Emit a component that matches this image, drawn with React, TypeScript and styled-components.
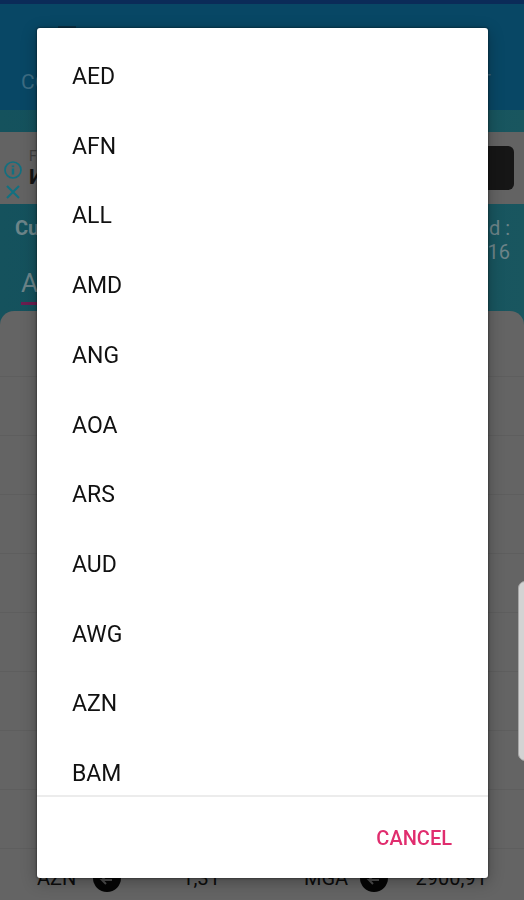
import React from "react";
import styled, { createGlobalStyle } from "styled-components";

const GlobalStyle = createGlobalStyle`
  * { box-sizing: border-box; }
  html, body, #root { height: 100%; }
  body {
    margin: 0;
    overflow: hidden;
    font-family: Roboto, "Liberation Sans", sans-serif;
    background: #646464;
  }
  button { font: inherit; border: 0; background: none; cursor: pointer; }
`;

const Page = styled.main`
  height: 100%;
  display: flex;
  flex-direction: column;
  overflow: hidden;
  background: linear-gradient(90deg, #15525d, #105060 50%, #19565f);
`;

const StatusBar = styled.div`
  flex: none;
  height: 4px;
  background: #0b2b58;
`;

const Header = styled.header`
  flex: none;
  height: 106px;
  padding: 22px 33px 0 21px;
  display: flex;
  flex-direction: column;
  justify-content: space-between;
  background: #084765;
`;

const MenuMark = styled.span`
  width: 18px;
  height: 3px;
  margin-left: 37px;
  background: #0a3146;
`;

const Tabs = styled.nav`
  display: flex;
  justify-content: space-between;
  padding-bottom: 16px;
  font-size: 21px;
  line-height: 24px;
  color: #3d6c82;
`;

const AdBanner = styled.aside`
  flex: none;
  height: 72px;
  margin-top: 22px;
  padding: 0 10px 0 4px;
  display: flex;
  align-items: center;
  background: #636363;
`;

const AdIcons = styled.div`
  display: flex;
  flex-direction: column;
  gap: 4px;
  padding-top: 25px;
`;

const AdIconButton = styled.button`
  display: flex;
  padding: 0;
  color: #127080;
`;

const AdText = styled.div`
  flex: 1;
  padding-left: 7px;
  color: #3e3e3e;
  font-size: 14px;
  line-height: 18px;
`;

const AdTitle = styled.strong`
  display: block;
  font-size: 21px;
  line-height: 24px;
  color: #141414;
`;

const AdAction = styled.div`
  width: 90px;
  height: 44px;
  border-radius: 6px;
  background: #161616;
`;

const Summary = styled.section`
  flex: none;
  height: 107px;
  padding: 12px 14px 0 15px;
  display: flex;
  justify-content: space-between;
  font-size: 20px;
  line-height: 24px;
  color: #6c8489;
`;

const Heading = styled.strong`
  display: block;
  font-weight: 700;
`;

const CurrencyField = styled.div`
  width: 90px;
  margin: 27px 0 0 6px;
  padding-bottom: 3px;
  border-bottom: 3px solid #6b1e50;
  font-size: 26px;
  line-height: 32px;
`;

const Updated = styled.div`
  text-align: right;
`;

const Rates = styled.section`
  flex: 1;
  display: flex;
  flex-direction: column;
  padding-top: 7px;
  border-radius: 14px 14px 0 0;
  overflow: hidden;
  background: #646464;
`;

const RateRow = styled.div`
  flex: none;
  height: 59px;
  padding: 0 37px 0 37px;
  display: grid;
  grid-template-columns: 1fr 1fr;
  column-gap: 84px;
  align-items: center;
  border-bottom: 1px solid #5e5e5e;
  font-size: 20px;
  color: #0c0c0c;
`;

const Rate = styled.div`
  display: grid;
  grid-template-columns: 55px 1fr auto;
  align-items: center;
`;

const EdgeHandle = styled.div`
  position: fixed;
  right: -8px;
  top: 64.5%;
  width: 14px;
  height: 20%;
  border-radius: 8px;
  border: 1px solid #a6a6a6;
  background: #d3d3d3;
`;

const Dialog = styled.div`
  position: fixed;
  inset: 28px 36px 22px 37px;
  display: flex;
  flex-direction: column;
  border-radius: 3px;
  background: #fff;
  box-shadow: 0 0 2px 1px rgba(0, 0, 0, 0.3), 0 4px 16px rgba(0, 0, 0, 0.3);
`;

const Scroller = styled.div`
  flex: 1;
  min-height: 0;
  overflow: hidden;
`;

const OptionList = styled.ul`
  height: 100%;
  margin: 14px 0 0;
  padding: 0;
  list-style: none;
  display: flex;
  flex-direction: column;
`;

const OptionItem = styled.li`
  flex: 1;
  display: flex;
`;

const Option = styled.button`
  flex: 1;
  padding: 0 35px;
  text-align: left;
  font-size: 23px;
  line-height: 28px;
  color: #111;
`;

const Actions = styled.footer`
  flex: none;
  height: 83px;
  padding: 0 28px;
  display: flex;
  align-items: center;
  justify-content: flex-end;
  border-top: 2px solid #ececec;
`;

const CancelButton = styled.button`
  padding: 8px;
  font-size: 20px;
  line-height: 24px;
  font-weight: 500;
  color: #e02d6e;
`;

const currencies = ["AED", "AFN", "ALL", "AMD", "ANG", "AOA", "ARS", "AUD", "AWG", "AZN", "BAM"];
const emptyRows = Array.from({ length: 9 }, (_, i) => i);
const rates = [
  { code: "AZN", amount: "1,31" },
  { code: "MGA", amount: "2900,91" },
];

const InfoIcon = () => (
  <svg width="18" height="18" viewBox="0 0 18 18" fill="none" stroke="currentColor" strokeWidth="1.7">
    <circle cx="9" cy="9" r="8" />
    <path d="M9 7.6V13.4M9 4.4V6.2" strokeWidth="2.4" />
  </svg>
);

const CloseIcon = () => (
  <svg width="18" height="18" viewBox="0 0 18 18" fill="none" stroke="currentColor" strokeWidth="2.1">
    <path d="M3 3L15 15M15 3L3 15" />
  </svg>
);

const SwapIcon = () => (
  <svg width="30" height="30" viewBox="0 0 30 30" fill="none">
    <circle cx="15" cy="15" r="14" fill="#050505" />
    <path d="M9 12H21L17 8M20 17H10L14 21M10 17L14 13" stroke="#4c4c4c" strokeWidth="2" />
  </svg>
);

export default function App() {
  return (
    <>
      <GlobalStyle />
      <Page>
        <StatusBar />
        <Header>
          <MenuMark />
          <Tabs>
            <span>CO</span>
            <span>T</span>
          </Tabs>
        </Header>
        <AdBanner>
          <AdIcons>
            <AdIconButton aria-label="Ad information"><InfoIcon /></AdIconButton>
            <AdIconButton aria-label="Close ad"><CloseIcon /></AdIconButton>
          </AdIcons>
          <AdText>
            F
            <AdTitle>И</AdTitle>
          </AdText>
          <AdAction />
        </AdBanner>
        <Summary>
          <div>
            <Heading>Cu</Heading>
            <CurrencyField>A</CurrencyField>
          </div>
          <Updated>
            d :<br />16
          </Updated>
        </Summary>
        <Rates>
          {emptyRows.map((i) => <RateRow key={i} />)}
          <RateRow>
            {rates.map(({ code, amount }) => (
              <Rate key={code}>
                <span>{code}</span>
                <SwapIcon />
                <span>{amount}</span>
              </Rate>
            ))}
          </RateRow>
        </Rates>
      </Page>
      <EdgeHandle />
      <Dialog role="dialog" aria-modal="true" aria-label="Choose a currency">
        <Scroller>
          <OptionList>
            {currencies.map((code) => (
              <OptionItem key={code}>
                <Option type="button">{code}</Option>
              </OptionItem>
            ))}
          </OptionList>
        </Scroller>
        <Actions>
          <CancelButton type="button">CANCEL</CancelButton>
        </Actions>
      </Dialog>
    </>
  );
}
